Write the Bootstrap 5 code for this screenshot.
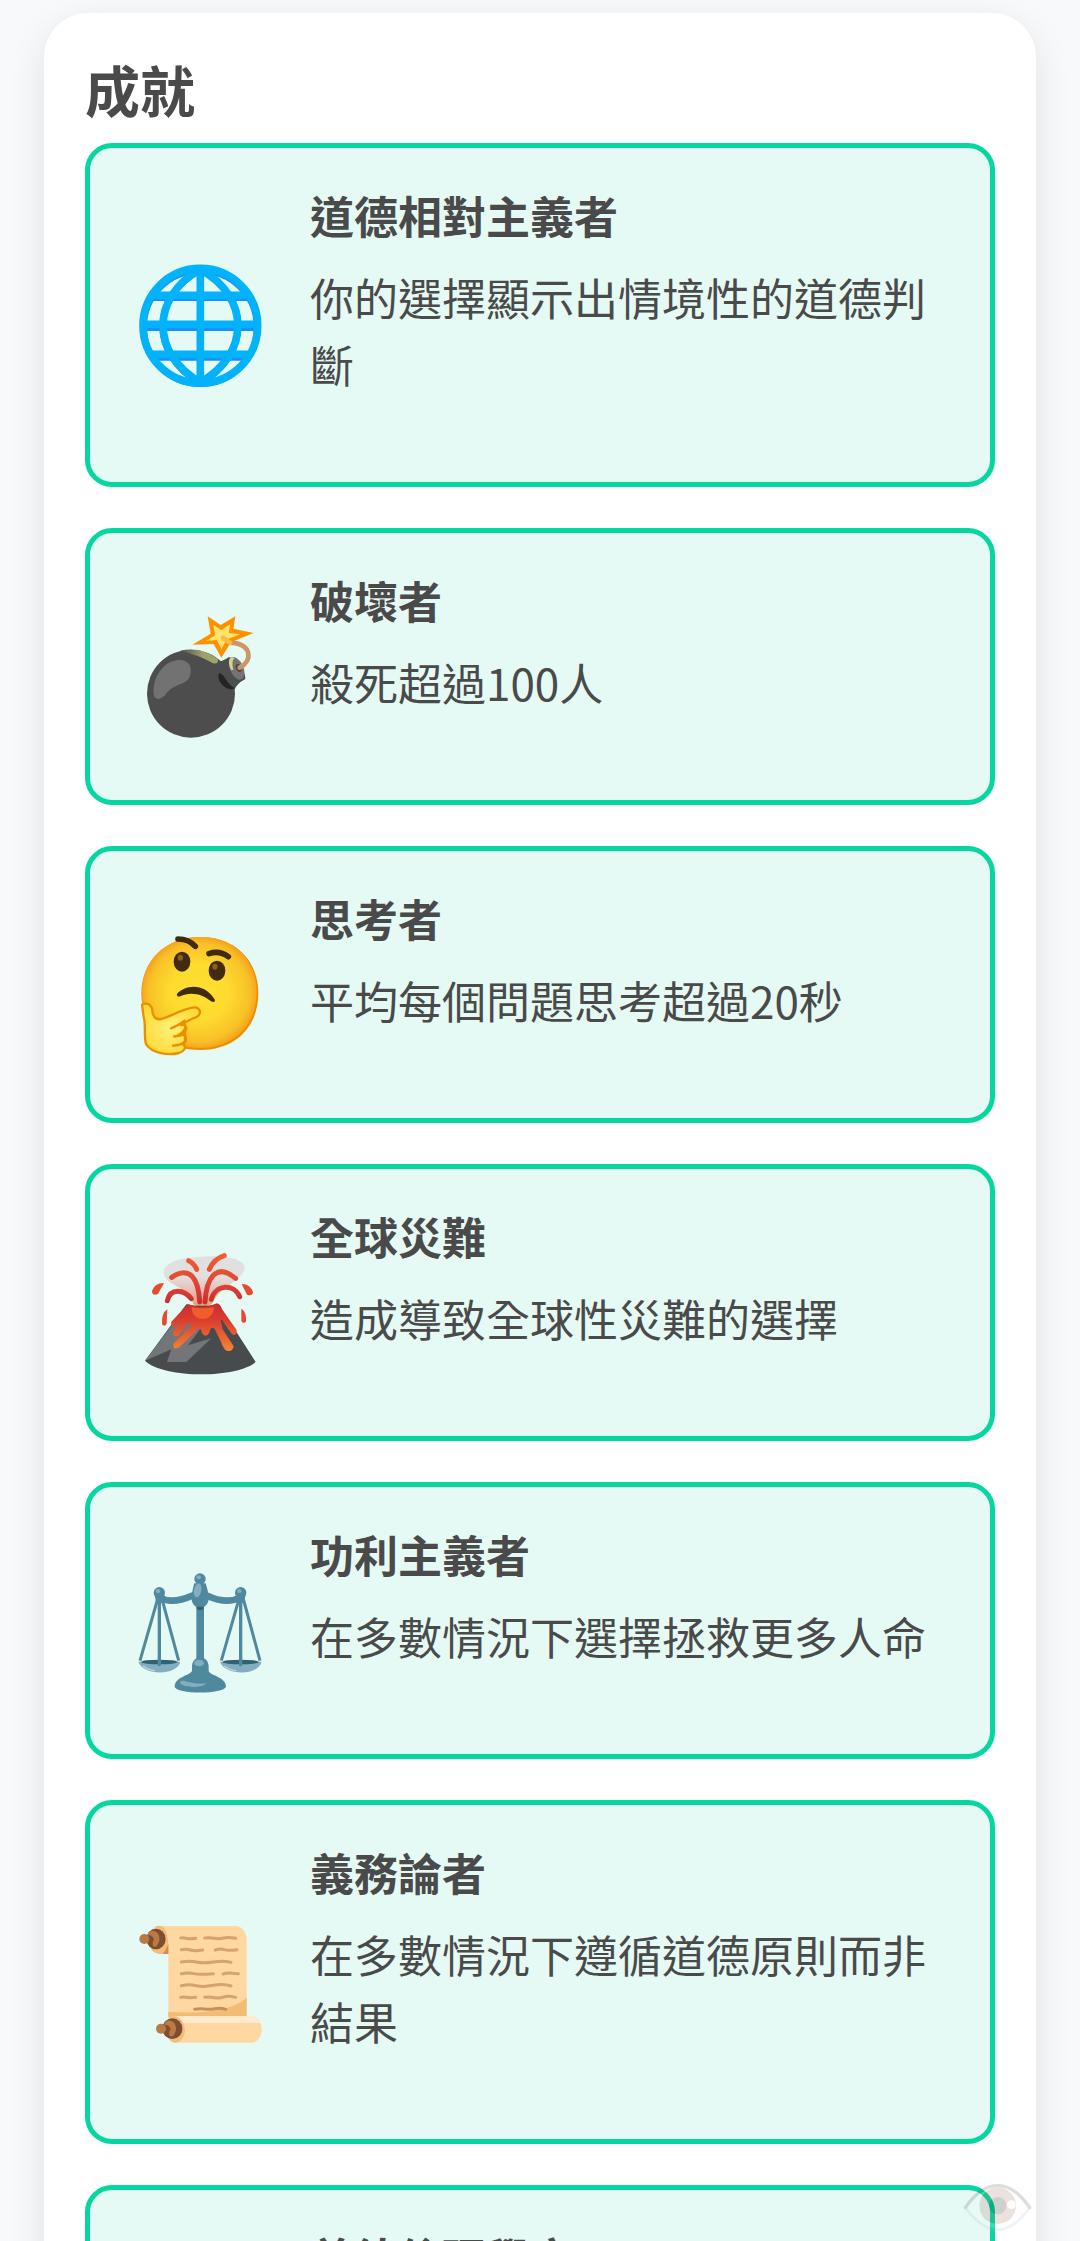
<!DOCTYPE html>
<html lang="zh-Hant">
<head>
<meta charset="utf-8">
<meta name="viewport" content="width=device-width, initial-scale=1">
<title>成就</title>
<link href="https://cdn.jsdelivr.net/npm/bootstrap@5.3.0/dist/css/bootstrap.min.css" rel="stylesheet">
<style>
html,body{height:100%;overflow:hidden}
body{background:#f8f9fb;color:#4a4a4a;font-family:"Noto Sans CJK TC",sans-serif;padding:13px 44px 0}
.panel{background:#fff;border-radius:44px;padding:41px 41px 60px;box-shadow:0 12px 36px rgba(0,0,0,.1)}
.panel-title{font-size:55px;line-height:68px;font-weight:700;margin-bottom:21px}
.achievements{gap:41px}
.achievement{background:#e5faf5;border:5px solid #06d6a0;border-radius:27px;padding:37px;gap:37px}
.achievement-icon{width:146px;height:146px;margin-top:20px}
.achievement h3{font-size:44px;line-height:61px;font-weight:700;margin-bottom:18px}
.achievement p{font-size:44px;line-height:67px;margin-bottom:47px}
.view-toggle{right:46px;bottom:8px;opacity:.2}
.view-toggle svg{width:72px;height:50px}
</style>
<script src="https://cdn.jsdelivr.net/npm/bootstrap@5.3.0/dist/js/bootstrap.bundle.min.js"></script>
</head>
<body>
<main class="panel">
<h2 class="panel-title">成就</h2>
<div class="achievements d-flex flex-column">

<article class="achievement d-flex align-items-center">
<svg class="achievement-icon flex-shrink-0" viewBox="21 34 438 438" aria-hidden="true">
<g fill="none" stroke="#1a8cff" stroke-width="20"><circle cx="241" cy="259" r="170"/><path d="M92 171H388M70 261H412M92 350H388"/><path d="M241 88C90 170 90 340 241 428M241 88C392 170 392 340 241 428"/></g>
<g fill="none" stroke="#02b2fb" stroke-width="23"><circle cx="241" cy="255" r="172"/><path d="M92 164H388M70 251H412M92 341H388M241 85V425"/><path d="M241 85C92 170 92 340 241 425M241 85C391 170 391 340 241 425"/></g>
</svg>
<div class="align-self-start"><h3>道德相對主義者</h3><p>你的選擇顯示出情境性的道德判斷</p></div>
</article>

<article class="achievement d-flex align-items-center">
<svg class="achievement-icon flex-shrink-0" viewBox="21 10 438 438" aria-hidden="true">
<defs><linearGradient id="rim"><stop offset="0" stop-color="#4d4d4d"/><stop offset=".6" stop-color="#a0a067"/><stop offset="1" stop-color="#a3a36a"/></linearGradient></defs>
<circle cx="213" cy="279" r="132" fill="#4d4d4d"/>
<path d="M275 180L302 182Q314 178 326 170C340 164 378 205 376 235Q348 250 343 269Z" fill="#4d4d4d"/>
<path d="M180 151Q240 136 293 175Q298 190 279 188Q238 163 180 151Z" fill="url(#rim)"/>
<path d="M298 217C315 222 318 247 343 262C325 277 284 240 298 217Z" fill="#242424"/>
<ellipse cx="350" cy="203" rx="20" ry="36" transform="rotate(-24 350 203)" fill="#747474"/>
<path d="M334 208C322 190 325 160 344 173Q333 179 340 208Z" fill="#d4d28c"/>
<ellipse cx="356" cy="202" rx="8" ry="12" transform="rotate(-24 356 202)" fill="#4d4141"/>
<path d="M102 287C94 235 127 180 178 178C211 178 218 206 209 228C195 257 162 244 135 284Q112 304 102 287Z" fill="#727272"/>
<path d="M263 47L302 73L346 47L340 84L401 97L333 125L304 171L281 130L217 132L272 99Z" fill="#ff9100"/>
<path d="M279 72L304 88L331 71L326 97L361 101L321 116L304 145L291 118L258 121L286 104Z" fill="#ffe36c"/>
<path d="M359 201C397 183 400 129 328 126" fill="none" stroke="#cc9767" stroke-width="14" stroke-linecap="round"/>
<path d="M309 112L330 126" fill="none" stroke="#fabb41" stroke-width="14" stroke-linecap="round"/>
</svg>
<div class="align-self-start"><h3>破壞者</h3><p>殺死超過100人</p></div>
</article>

<article class="achievement d-flex align-items-center">
<svg class="achievement-icon flex-shrink-0" viewBox="21 21 438 438" aria-hidden="true">
<defs><radialGradient id="face"><stop offset="0" stop-color="#ffe030"/><stop offset=".5" stop-color="#fedb2f"/><stop offset=".88" stop-color="#f8c127"/><stop offset="1" stop-color="#f6a61f"/></radialGradient><radialGradient id="hand"><stop offset="0" stop-color="#fff176"/><stop offset="1" stop-color="#ffdc3d"/></radialGradient></defs>
<path d="M241 66C346 66 415 137 415 235C415 335 346 405 241 405C137 405 64 335 64 235C64 137 137 66 241 66Z" fill="#eb8f00"/>
<path d="M240 66C343 66 410 137 410 231C410 328 343 399 240 399C137 399 66 328 66 231C66 137 137 66 240 66Z" fill="url(#face)"/>
<g fill="#422b0d"><ellipse cx="186" cy="140" rx="25" ry="30"/><ellipse cx="291" cy="167" rx="25" ry="30"/></g>
<g fill="#896024"><ellipse cx="181" cy="128" rx="8" ry="9"/><ellipse cx="285" cy="155" rx="8" ry="9"/></g>
<g fill="none" stroke="#422b0d" stroke-width="17" stroke-linecap="round" stroke-linejoin="round"><path d="M174 72Q206 72 226 94M267 116Q298 105 325 125"/></g>
<path d="M171 236C195 209 255 201 285 255Q285 265 273 259C248 236 208 229 181 244Q170 247 171 236Z" fill="#422b0d"/>
<path d="M66 269C80 261 97 268 98 293C105 324 128 312 153 301C177 290 210 276 227 277C249 285 240 306 219 310L180 330C204 326 204 344 187 358C202 362 201 378 190 389C201 395 193 409 177 414C144 422 98 416 79 389C70 370 79 334 71 306Z" fill="url(#hand)" stroke="#eb8f00" stroke-width="7"/>
<path d="M153 340Q176 331 193 318L196 340Q183 362 160 365Q183 363 195 357L195 378Q185 391 159 392" fill="none" stroke="#eb8f00" stroke-width="7" stroke-linecap="round"/>
</svg>
<div class="align-self-start"><h3>思考者</h3><p>平均每個問題思考超過20秒</p></div>
</article>

<article class="achievement d-flex align-items-center">
<svg class="achievement-icon flex-shrink-0" viewBox="21 14 438 438" aria-hidden="true">
<defs><linearGradient id="smoke" x2="0" y2="1"><stop offset=".4" stop-color="#e0e0e0"/><stop offset=".7" stop-color="#e9bbb1"/><stop offset="1" stop-color="#e8a15d"/></linearGradient><linearGradient id="lava" x2="0" y2="1"><stop offset="0" stop-color="#cb2c31"/><stop offset=".35" stop-color="#db3d2e"/><stop offset="1" stop-color="#f58436"/></linearGradient><linearGradient id="jet" gradientUnits="userSpaceOnUse" x1="240" y1="200" x2="240" y2="60"><stop offset="0" stop-color="#cf2e31"/><stop offset=".5" stop-color="#e34a33"/><stop offset="1" stop-color="#f15d31"/></linearGradient></defs>
<path d="M220 207C209 151 132 153 131 111C132 82 180 67 236 65C302 57 374 68 374 96C373 135 298 152 275 207Q247 221 220 207Z" fill="url(#smoke)"/>
<path d="M75 376L199 207Q246 216 296 207L407 380C352 430 130 430 75 376Z" fill="#484b4d"/>
<path d="M75 376L193 220L263 245L236 288L204 330L274 309L199 380H141L154 342Z" fill="#727678"/>
<path d="M204 206Q243 225 291 204Q302 207 306 222L350 284Q351 306 335 295L312 264Q305 249 302 254L308 282L341 333Q338 351 320 346Q311 342 303 319L284 281Q272 270 268 292Q258 309 246 294Q242 275 235 281L178 336Q158 346 160 325L213 272Q214 258 201 267L178 300Q160 310 159 289L182 261L164 276Q151 277 154 259Z" fill="url(#lava)"/>
<path d="M215 216Q248 222 281 216C284 263 212 262 215 216Z" fill="#f15b2d"/>
<g fill="none" stroke="url(#jet)" stroke-linecap="round" stroke-width="15"><path d="M239 200C236 132 211 89 155 126"/><path d="M255 200C259 131 287 79 347 129"/><path d="M214 190C193 163 151 155 142 196"/><path d="M274 192C286 146 343 144 359 184"/><path d="M230 102Q222 83 206 76M268 102Q282 70 313 61"/></g>
<g fill="#e44b31"><path d="M132 143Q105 142 96 166Q96 183 114 176Z"/><path d="M365 146Q390 145 399 170Q397 184 381 178Z"/><path d="M142 222Q124 233 126 267Q134 276 140 265Z"/><path d="M364 220Q380 230 378 258Q370 268 364 256Z"/></g>
</svg>
<div class="align-self-start"><h3>全球災難</h3><p>造成導致全球性災難的選擇</p></div>
</article>

<article class="achievement d-flex align-items-center">
<svg class="achievement-icon flex-shrink-0" viewBox="21 8 438 438" aria-hidden="true">
<g fill="none" stroke="#4f899f"><path d="M118 126Q155 148 217 121M362 126Q320 148 262 121" stroke-width="20" stroke-linecap="round"/><path d="M113 131L60 316M126 131L176 316M357 131L304 316M370 131L420 316" stroke-width="9"/></g>
<g fill="#82aec0"><path d="M55 319H181C171 362 70 362 55 319ZM300 319H425C415 362 315 362 300 319Z"/></g>
<g fill="#2f6371"><ellipse cx="118" cy="320" rx="54" ry="7"/><ellipse cx="362" cy="320" rx="54" ry="7"/></g>
<path d="M118 126V328M362 126V328" stroke="#4f899f" stroke-width="10" stroke-linecap="round"/>
<g fill="#4f899f"><path d="M229 145H252V315H229ZM223 84H257Q266 108 266 133C260 165 220 165 215 133Q216 104 223 84Z"/><circle cx="240" cy="71" r="17"/><circle cx="118" cy="112" r="17"/><circle cx="362" cy="112" r="17"/><path d="M104 120H134L128 143H109ZM347 120H377L371 143H352Z"/><path d="M216 334C216 297 266 297 266 334V346C269 361 318 364 318 394C312 417 168 417 164 394C164 364 210 361 216 346Z"/></g>
<path d="M230 154H251V160Q240 168 230 160Z" fill="#2f6371"/>
<g fill="#82aec0"><ellipse cx="233" cy="105" rx="11" ry="21" transform="rotate(12 233 105)"/><ellipse cx="236" cy="66" rx="7" ry="6"/><ellipse cx="114" cy="107" rx="7" ry="6"/><ellipse cx="358" cy="107" rx="7" ry="6"/><ellipse cx="237" cy="323" rx="15" ry="10"/><path d="M180 380C190 368 209 389 259 384C249 400 180 398 180 380Z"/></g>
<path d="M69 331Q84 344 105 346M313 331Q328 344 349 346" fill="none" stroke="#b9d4df" stroke-width="4"/>
</svg>
<div class="align-self-start"><h3>功利主義者</h3><p>在多數情況下選擇拯救更多人命</p></div>
</article>

<article class="achievement d-flex align-items-center">
<svg class="achievement-icon flex-shrink-0" viewBox="21 12 438 438" aria-hidden="true">
<path d="M110 63H350Q374 68 380 96V340H145V147H120C80 145 75 75 110 63Z" fill="#ffd7a1"/>
<path d="M108 64C136 55 147 84 145 147H120Q98 145 90 126Z" fill="#f1bd78"/><path d="M145 118V147H128Q138 136 145 118Z" fill="#d68a56"/>
<path d="M145 320Q320 332 380 278V337H145Z" fill="#f1bd72"/>
<path d="M155 334H398C434 342 434 405 398 413H160Q140 405 145 385Z" fill="#ffd7a1"/><path d="M170 334H398Q414 338 420 354H180Z" fill="#ffebcf"/>
<path d="M145 347L152 334C203 326 209 410 165 413Q145 407 145 395Z" fill="#f1bd78"/>
<g fill="#7d4e33"><ellipse cx="108" cy="102" rx="29" ry="31"/><ellipse cx="157" cy="371" rx="30" ry="31"/></g>
<g fill="#bb7a41"><path d="M84 83C107 66 128 94 114 116Q107 132 98 122L99 104L84 92ZM134 352C157 335 177 363 164 386Q157 401 147 390L149 373L134 361Z"/></g>
<path d="M76 92Q100 86 102 106Q91 115 76 113Z" fill="#7d4e33"/><path d="M126 361Q150 356 152 375Q140 384 126 382Z" fill="#7d4e33"/><circle cx="73" cy="102" r="15" fill="#bb7a41"/><circle cx="123" cy="371" r="15" fill="#bb7a41"/>
<g fill="none" stroke="#d5a273" stroke-width="9" stroke-linecap="round"><path d="M182 99Q190 97 199 100T227 100M254 99Q270 97 284 100T311 99T347 100M184 134Q198 131 211 135T248 135M286 135Q300 130 313 134T351 134M184 171Q208 166 229 171T280 171T333 172M184 206Q207 202 222 206T280 206M309 207Q325 203 337 205T355 206M184 242Q208 237 229 242T280 241T333 243M182 277Q190 275 199 277T227 277M254 277Q270 275 284 278T311 276T347 277"/><path d="M224 313Q239 310 253 312T285 311T317 313" stroke="#c98f58"/></g>
</svg>
<div class="align-self-start"><h3>義務論者</h3><p>在多數情況下遵循道德原則而非結果</p></div>
</article>

<article class="achievement d-flex align-items-center">
<svg class="achievement-icon flex-shrink-0" viewBox="0 0 146 146" aria-hidden="true"></svg>
<div class="align-self-start"><h3>美德倫理學家</h3></div>
</article>
</div>
</main>
<button type="button" class="view-toggle btn p-0 border-0 position-fixed d-flex" aria-label="檢視">
<svg viewBox="186 249 216 150" aria-hidden="true">
<path d="M196 323Q242 255 293 255T389 323Q343 390 293 390T196 323Z" fill="#fafafa"/><path d="M196 323Q245 389 293 389T389 323" fill="none" stroke="#b0bec5" stroke-width="8"/>
<circle cx="293" cy="317" r="55" fill="#9b6b5b"/><circle cx="293" cy="317" r="26" fill="#111"/><circle cx="334" cy="314" r="13" fill="#fafafa"/>
<path d="M196 323Q242 257 293 257T389 323" fill="none" stroke="#555" stroke-width="10" stroke-linecap="round"/>
</svg>
</button>
</body>
</html>
